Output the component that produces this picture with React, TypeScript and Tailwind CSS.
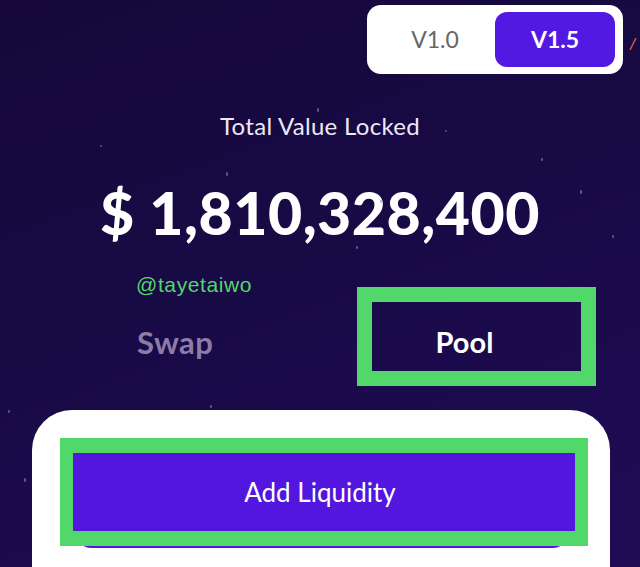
import React from "react";

const stars: [number, number, number][] = [
  [317, 108, 4], [226, 172, 4], [580, 190, 4], [541, 158, 3], [380, 200, 3], [100, 145, 2], [356, 246, 3],
  [210, 405, 3], [24, 478, 4], [612, 235, 3], [445, 130, 2], [8, 410, 3],
];

export default function App() {
  return (
    <div className="relative h-[567px] w-[640px] overflow-hidden bg-[linear-gradient(160deg,#150839_0%,#180a45_45%,#1f0c57_100%)] font-['Lato',sans-serif]">
      {stars.map(([x, y, h], i) => (
        <span key={i} className="absolute w-[1.5px] rounded bg-[#8d7fd0]/60" style={{ left: x, top: y, height: h }} />
      ))}
      <svg className="absolute left-[628px] top-[36px]" width="10" height="16" viewBox="0 0 10 16">
        <path d="M2 14 L8 2" stroke="#d5563a" strokeWidth="1.5" />
      </svg>

      <div className="flex justify-end pr-[17px] pt-[5px]">
        <div className="flex h-[69px] w-[256px] items-center rounded-[14px] bg-white pl-[8px] pr-[8px]">
          <div className="flex-1 text-center text-[23px] text-[#666]">V1.0</div>
          <div className="flex h-[55px] w-[120px] items-center justify-center rounded-[12px] bg-[#5318e2] text-[23px] font-bold text-white">
            V1.5
          </div>
        </div>
      </div>

      <div className="mt-[40px] text-center text-[24px] leading-none tracking-[0.3px] text-[#ece8f6]">Total Value Locked</div>
      <div className="mt-[45px] text-center text-[59px] font-black leading-none tracking-[0.5px] text-white">$ 1,810,328,400</div>

      <div className="mt-[32px] pl-[136px] font-['Liberation_Sans',sans-serif] text-[21px] leading-none tracking-[0.6px] text-[#55d46c]">@tayetaiwo</div>

      <div className="-mt-[8px] flex items-start">
        <div className="w-[357px] pl-[137px] pt-[40px] text-[31px] font-bold leading-none tracking-[0.4px] text-[#8b7ca8]">Swap</div>
        <div className="flex h-[99px] w-[239px] items-center justify-center border-[15px] border-[#52d76a] pr-[24px] pt-[10px] text-[29px] font-bold text-white">
          Pool
        </div>
      </div>

      <div className="ml-[32px] mt-[24px] h-[200px] w-[578px] rounded-t-[40px] bg-white pt-[28px]">
        <div className="relative ml-[28px] w-[528px]">
          <div className="absolute bottom-[-2px] left-[17px] right-[21px] h-[30px] rounded-b-[14px] bg-[#5317df]" />
          <div className="relative flex h-[108px] items-center justify-center border-[13px] border-y-[15px] border-[#52d76a] bg-[#5316de] pr-[8px] text-[26px] text-white">
            Add Liquidity
          </div>
        </div>
      </div>
    </div>
  );
}
